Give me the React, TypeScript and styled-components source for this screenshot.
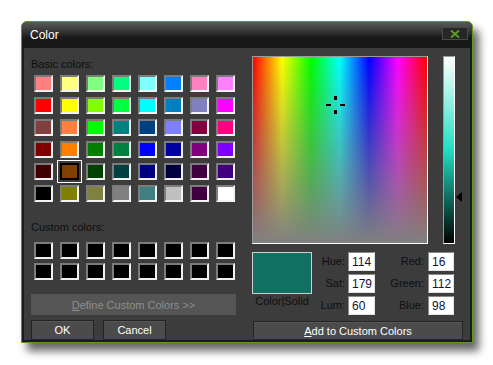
import React from 'react'
import styled, { createGlobalStyle } from 'styled-components'

const GlobalStyle = createGlobalStyle`
  html, body {
    margin: 0;
    padding: 0;
    background: #fff;
  }
  body {
    font-family: "Liberation Sans", Arial, sans-serif;
  }
`

const Page = styled.div`
  width: 493px;
  height: 365px;
  padding: 21px 0 0 21px;
  box-sizing: border-box;
`

const Window = styled.div`
  width: 452px;
  box-sizing: border-box;
  border: 1px solid #5b9a1c;
  border-radius: 6px 6px 0 0;
  background: #1b1b1b;
  box-shadow: 6px 8px 9px rgba(0, 0, 0, 0.6);
  display: flex;
  flex-direction: column;
`

const TitleBar = styled.div`
  height: 26px;
  display: flex;
  align-items: flex-start;
  padding: 0 4px 0 8px;
  border-radius: 5px 5px 0 0;
  background: linear-gradient(#5a5a5a 0%, #2c2c2c 45%, #191919 60%, #171717 100%);
`

const Title = styled.div`
  margin-top: 6px;
  font-size: 12px;
  line-height: 14px;
  color: #fff;
`

const CloseButton = styled.div`
  margin: 5px 0 0 auto;
  width: 26px;
  height: 13px;
  box-sizing: border-box;
  border: 1px solid #4a4a4a;
  background: #262626;
  display: flex;
  align-items: center;
  justify-content: center;
`

const Body = styled.div`
  margin: 0 2px 2px;
  height: 292px;
  background: #3c3c3c;
  display: flex;
  gap: 16px;
  padding-left: 7px;
`

const LeftColumn = styled.div`
  width: 205px;
  display: flex;
  flex-direction: column;
`

const SectionLabel = styled.div<{ $top: number }>`
  margin-top: ${(p) => p.$top}px;
  font-size: 11px;
  line-height: 13px;
  color: #0e0e0e;
`

const SwatchGrid = styled.div<{ $top: number; $rowGap: number }>`
  margin: ${(p) => p.$top}px 0 0 3px;
  display: grid;
  grid-template-columns: repeat(8, 19px);
  grid-auto-rows: 17px;
  column-gap: 7px;
  row-gap: ${(p) => p.$rowGap}px;
`

const Swatch = styled.div<{ $color: string; $selected?: boolean }>`
  box-sizing: border-box;
  border: 2px solid;
  border-color: ${(p) => (p.$selected ? '#000' : '#7c7c7c #f2f2f2 #f2f2f2 #7c7c7c')};
  background: ${(p) => p.$color};
  outline: ${(p) => (p.$selected ? '1px solid #fff' : 'none')};
  outline-offset: 2px;
`

const BaseButton = styled.button`
  box-sizing: border-box;
  padding: 0;
  font-family: "Liberation Sans", Arial, sans-serif;
  font-size: 11px;
  color: #fff;
  background: #4b4b4b;
  border: 1px solid #242424;
  box-shadow: inset 0 1px 0 #575757;
`

const DefineButton = styled(BaseButton)`
  margin-top: 14px;
  width: 205px;
  height: 21px;
  border: none;
  box-shadow: none;
  background: #555;
  color: #8e8e8e;
`

const ButtonRow = styled.div`
  margin-top: 5px;
  display: flex;
  gap: 9px;
`

const DialogButton = styled(BaseButton)`
  width: 63px;
  height: 20px;
`

const RightColumn = styled.div`
  width: 211px;
  display: flex;
  flex-direction: column;
`

const PickerRow = styled.div`
  margin-top: 8px;
  display: flex;
  align-items: flex-start;
`

const Spectrum = styled.div`
  position: relative;
  width: 177px;
  height: 188px;
  box-sizing: border-box;
  border: 1px solid;
  border-color: #9a9a9a #fff #fff #9a9a9a;
  background: linear-gradient(to bottom, rgba(128, 128, 128, 0), #808080),
    linear-gradient(to right, #f00, #ff0 16.7%, #0f0 33.3%, #0ff 50%, #00f 66.7%, #f0f 83.3%, #f00);
`

const Crosshair = styled.svg`
  position: absolute;
  left: 73px;
  top: 38px;
`

const LumBar = styled.div<{ $hue: number; $sat: number }>`
  margin-left: 15px;
  width: 12px;
  height: 188px;
  box-sizing: border-box;
  border: 1px solid;
  border-color: #9a9a9a #fff #fff #9a9a9a;
  background: linear-gradient(
    to bottom,
    #fff,
    hsl(${(p) => p.$hue} ${(p) => p.$sat}% 50%),
    #000
  );
`

const ArrowTrack = styled.div`
  position: relative;
  margin-left: 1px;
  width: 7px;
  height: 188px;
`

const Arrow = styled.div`
  position: absolute;
  left: 0;
  width: 0;
  height: 0;
  border-top: 5.5px solid transparent;
  border-bottom: 5.5px solid transparent;
  border-right: 6px solid #000;
`

const FieldGrid = styled.div`
  margin-top: 8px;
  display: grid;
  grid-template-columns: 60px 36px 27px 53px 26px;
  grid-auto-rows: 19px;
  row-gap: 3px;
`

const PreviewCell = styled.div`
  grid-column: 1;
  grid-row: 1 / span 3;
  display: flex;
  flex-direction: column;
`

const PreviewSwatch = styled.div<{ $color: string }>`
  height: 42px;
  box-sizing: border-box;
  border: 1px solid #cfcfcf;
  background: ${(p) => p.$color};
`

const PreviewCaption = styled.div`
  margin-top: 1px;
  font-size: 11px;
  line-height: 13px;
  text-align: center;
  color: #0e0e0e;
`

const FieldLabel = styled.div<{ $pad: number }>`
  padding-right: ${(p) => p.$pad}px;
  font-size: 11px;
  line-height: 19px;
  text-align: right;
  color: #0e0e0e;
`

const FieldInput = styled.input`
  width: 100%;
  height: 19px;
  box-sizing: border-box;
  margin: 0;
  padding: 0 0 0 3px;
  border: 1px solid;
  border-color: #8a8a8a #e2e2e2 #e2e2e2 #8a8a8a;
  background: #fff;
  font-family: "Liberation Sans", Arial, sans-serif;
  font-size: 12px;
  color: #121236;
  outline: none;
`

const AddButton = styled(BaseButton)`
  margin: 6px 0 0 1px;
  width: 210px;
  height: 19px;
`

const basicColors = [
  '#ff8080', '#ffff80', '#80ff80', '#00ff80', '#80ffff', '#0080ff', '#ff80c0', '#ff80ff',
  '#ff0000', '#ffff00', '#80ff00', '#00ff40', '#00ffff', '#0080c0', '#8080c0', '#ff00ff',
  '#804040', '#ff8040', '#00ff00', '#008080', '#004080', '#8080ff', '#800040', '#ff0080',
  '#800000', '#ff8000', '#008000', '#008040', '#0000ff', '#0000a0', '#800080', '#8000ff',
  '#400000', '#804000', '#004000', '#004040', '#000080', '#000040', '#400040', '#400080',
  '#000000', '#808000', '#808040', '#808080', '#408080', '#c0c0c0', '#400040', '#ffffff',
]

const SELECTED = 33

const color = { hue: 114, sat: 179, lum: 60, red: 16, green: 112, blue: 98 }

const App = () => {
  const arrowTop = Math.round((1 - color.lum / 240) * 188 - 5.5)
  const hueDeg = Math.round((color.hue / 240) * 360)
  const satPct = Math.round((color.sat / 240) * 100)
  const hex = `rgb(${color.red}, ${color.green}, ${color.blue})`

  return (
    <Page>
      <GlobalStyle />
      <Window>
        <TitleBar>
          <Title>Color</Title>
          <CloseButton>
            <svg width="10" height="8" viewBox="0 0 10 8">
              <path d="M1 0.5 L9 7.5 M9 0.5 L1 7.5" stroke="#5fa21f" strokeWidth="1.8" />
            </svg>
          </CloseButton>
        </TitleBar>

        <Body>
          <LeftColumn>
            <SectionLabel $top={10}>Basic colors:</SectionLabel>
            <SwatchGrid $top={4} $rowGap={5}>
              {basicColors.map((c, i) => (
                <Swatch key={i} $color={c} $selected={i === SELECTED} />
              ))}
            </SwatchGrid>

            <SectionLabel $top={19}>Custom colors:</SectionLabel>
            <SwatchGrid $top={8} $rowGap={4}>
              {Array.from({ length: 16 }).map((_, i) => (
                <Swatch key={i} $color="#000" />
              ))}
            </SwatchGrid>

            <DefineButton>
              <u>D</u>efine Custom Colors &gt;&gt;
            </DefineButton>
            <ButtonRow>
              <DialogButton>OK</DialogButton>
              <DialogButton>Cancel</DialogButton>
            </ButtonRow>
          </LeftColumn>

          <RightColumn>
            <PickerRow>
              <Spectrum>
                <Crosshair width="20" height="20" viewBox="0 0 20 20">
                  <rect x="8" y="1" width="3" height="4" fill="#000" />
                  <rect x="8" y="15" width="3" height="4" fill="#000" />
                  <rect x="0" y="9" width="5" height="2" fill="#000" />
                  <rect x="14" y="9" width="5" height="2" fill="#000" />
                </Crosshair>
              </Spectrum>
              <LumBar $hue={hueDeg} $sat={satPct} />
              <ArrowTrack>
                <Arrow style={{ top: arrowTop }} />
              </ArrowTrack>
            </PickerRow>

            <FieldGrid>
              <PreviewCell>
                <PreviewSwatch $color={hex} />
                <PreviewCaption>Color|Solid</PreviewCaption>
              </PreviewCell>
              <FieldLabel $pad={3}>Hue:</FieldLabel>
              <FieldInput readOnly value={color.hue} />
              <FieldLabel $pad={4}>Red:</FieldLabel>
              <FieldInput readOnly value={color.red} />
              <FieldLabel $pad={3}>Sat:</FieldLabel>
              <FieldInput readOnly value={color.sat} />
              <FieldLabel $pad={4}>Green:</FieldLabel>
              <FieldInput readOnly value={color.green} />
              <FieldLabel $pad={3}>Lum:</FieldLabel>
              <FieldInput readOnly value={color.lum} />
              <FieldLabel $pad={4}>Blue:</FieldLabel>
              <FieldInput readOnly value={color.blue} />
            </FieldGrid>

            <AddButton>
              <u>A</u>dd to Custom Colors
            </AddButton>
          </RightColumn>
        </Body>
      </Window>
    </Page>
  )
}

export default App
